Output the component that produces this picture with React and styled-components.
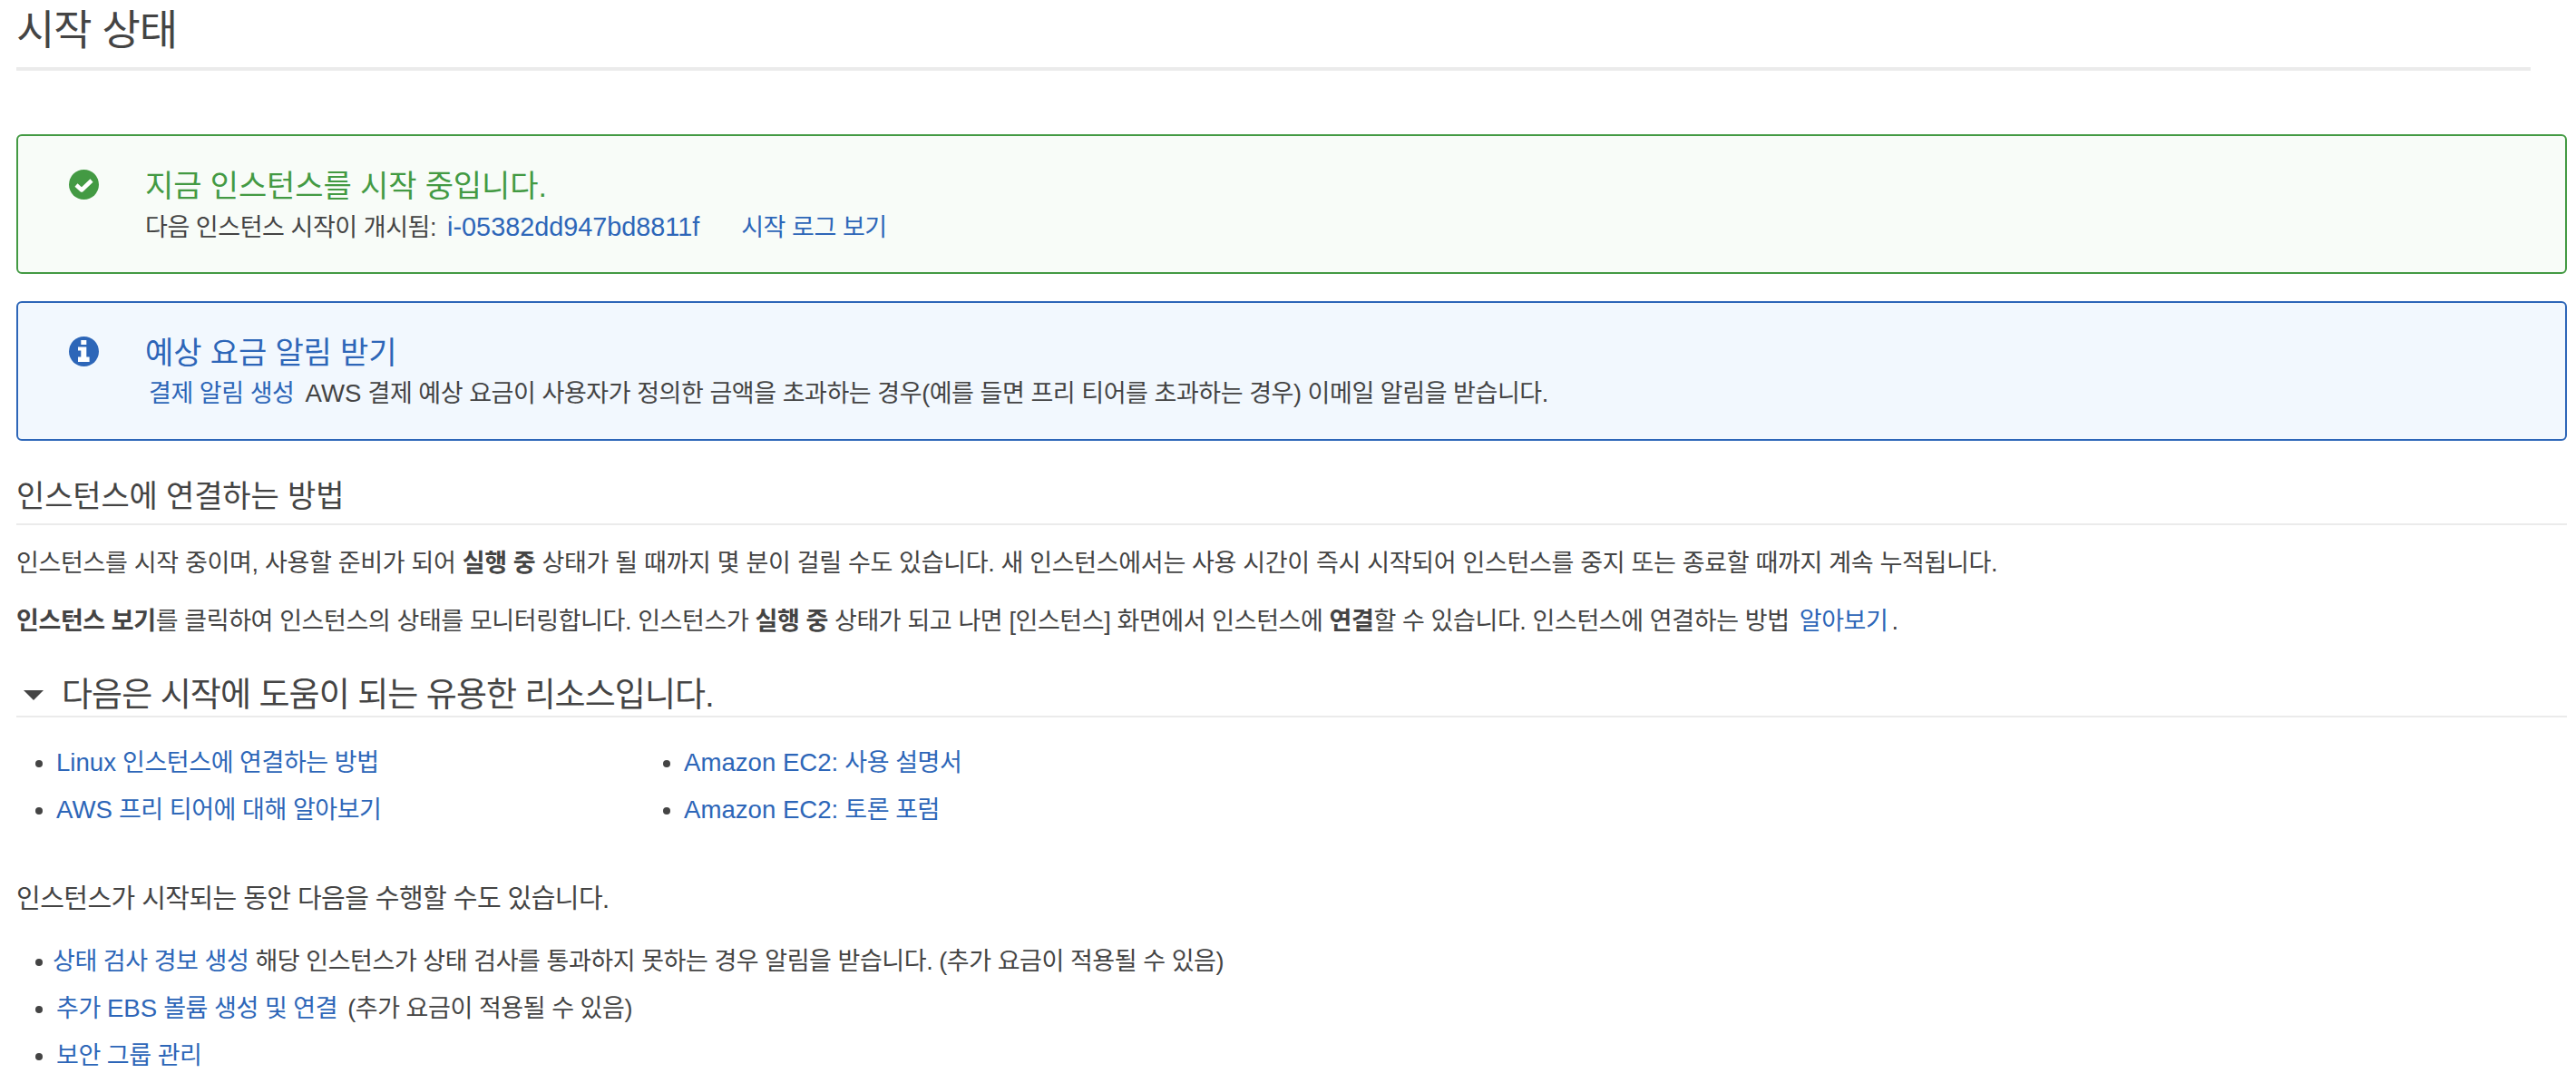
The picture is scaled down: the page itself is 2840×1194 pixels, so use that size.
import React from "react";
import styled, { createGlobalStyle } from "styled-components";

const Global = createGlobalStyle`
  html, body { margin: 0; padding: 0; background: #fff; height: 1194px; overflow: hidden; }
  body { font-family: "Liberation Sans", "Noto Sans CJK KR", sans-serif; color: #444; font-size: 27px; letter-spacing: -0.44px; }
  * { box-sizing: border-box; }
`;

const Page = styled.div`
  padding: 0 10px 0 18px;
`;
const Title = styled.h1`
  margin: 0 40px 70px 0;
  height: 78px;
  border-bottom: 4px solid #ebebeb;
  font-size: 46px;
  letter-spacing: -1px;
  font-weight: 400;
  line-height: 66px;
  color: #444;
`;
const Alert = styled.div`
  display: flex;
  height: 154px;
  margin-bottom: ${(p) => p.$mb}px;
  padding: 33px 0 0 56px;
  border: 2px solid ${(p) => p.$color};
  border-radius: 6px;
  background: ${(p) => p.$bg};
`;
const IconSlot = styled.div`
  flex: 0 0 33px;
  height: 33px;
  margin: 4px 51px 0 0;
`;
const AlertBody = styled.div`
  display: flex;
  flex-direction: column;
`;
const AlertTitle = styled.div`
  font-size: 34px;
  letter-spacing: -0.1px;
  line-height: 44px;
  color: ${(p) => p.$color};
`;
const AlertText = styled.div`
  line-height: 46px;
  color: #444;
  white-space: nowrap;
`;
const Link = styled.a`
  color: #2d66b8;
  text-decoration: none;
  margin: ${(p) => p.$m || "0"};
`;
const Latin = styled.span`
  font-size: ${(p) => p.$size || 27.6}px;
  letter-spacing: 0;
  margin: ${(p) => p.$m || "0"};
`;
const SectionHeading = styled.h2`
  margin: 0 0 20px;
  height: 93px;
  padding-top: 39px;
  border-bottom: 2px solid #ebebeb;
  font-size: 34px;
  letter-spacing: -0.13px;
  line-height: 44px;
  font-weight: 400;
`;
const Para = styled.p`
  margin: 0;
  height: 64px;
  line-height: 44px;
  white-space: nowrap;
  letter-spacing: ${(p) => p.$ls}px;
`;
const Resources = styled.h2`
  display: flex;
  align-items: center;
  gap: 20px;
  margin: 0;
  height: 64px;
  padding: 17px 0 0 8px;
  border-bottom: 2px solid #ebebeb;
  font-size: 37px;
  letter-spacing: -0.92px;
  line-height: 45px;
  font-weight: 400;
`;
const Caret = styled.span`
  width: 0;
  height: 0;
  border-left: 11px solid transparent;
  border-right: 11px solid transparent;
  border-top: 11px solid #444;
`;
const ResourceGrid = styled.ul`
  display: grid;
  grid-template-columns: 692px 600px;
  grid-auto-rows: 52px;
  margin: 0;
  padding: 24px 0 0 44px;
  line-height: 52px;
`;
const Item = styled.li`
  white-space: nowrap;
  &::marker { color: #444; }
`;
const Note = styled.span`
  margin-left: 4px;
`;
const Lead = styled.p`
  margin: 50px 0 0;
  height: 44px;
  font-size: 29px;
  letter-spacing: -0.55px;
  line-height: 44px;
`;
const ActionList = styled.ul`
  margin: 21px 0 0;
  padding: 0 0 0 44px;
  line-height: 52px;
`;

const CheckIcon = () => (
  <svg width="33" height="33" viewBox="0 0 33 33">
    <circle cx="16.5" cy="16.5" r="16.5" fill="#439a43" />
    <path d="M8 17l6 5.500L25 12" fill="none" stroke="#fff" strokeWidth="4.500" strokeLinejoin="round" />
  </svg>
);
const InfoIcon = () => (
  <svg width="33" height="33" viewBox="0 0 33 33">
    <circle cx="16.5" cy="16.5" r="16.5" fill="#2d66b8" />
    <rect x="13.300" y="4" width="6" height="5" fill="#fff" />
    <path d="M10 11.500h9.300V22.500h3.300V28H10V22.500h3.300V15.500H10z" fill="#fff" />
  </svg>
);

export default function App() {
  return (
    <Page>
      <Global />
      <Title>시작 상태</Title>
      <Alert $color="#439a43" $bg="#f8fcf8" $mb={30}>
        <IconSlot><CheckIcon /></IconSlot>
        <AlertBody>
          <AlertTitle $color="#439a43">지금 인스턴스를 시작 중입니다.</AlertTitle>
          <AlertText>
            다음 인스턴스 시작이 개시됨: <Link $m="0 0 0 5px"><Latin $size={28.8}>i-05382dd947bd8811f</Latin></Link>
            <Link $m="0 0 0 46px">시작 로그 보기</Link>
          </AlertText>
        </AlertBody>
      </Alert>
      <Alert $color="#2d66b8" $bg="#f2f8fe" $mb={0}>
        <IconSlot><InfoIcon /></IconSlot>
        <AlertBody>
          <AlertTitle $color="#2d66b8">예상 요금 알림 받기</AlertTitle>
          <AlertText>
            <Link $m="0 0 0 4px">결제 알림 생성</Link> <Latin $m="0 0 0 5px">AWS</Latin> 결제 예상 요금이 사용자가 정의한 금액을 초과하는 경우(예를 들면 프리 티어를 초과하는 경우) 이메일 알림을 받습니다.
          </AlertText>
        </AlertBody>
      </Alert>
      <SectionHeading>인스턴스에 연결하는 방법</SectionHeading>
      <Para $ls={-0.32}>인스턴스를 시작 중이며, 사용할 준비가 되어 <b>실행 중</b> 상태가 될 때까지 몇 분이 걸릴 수도 있습니다. 새 인스턴스에서는 사용 시간이 즉시 시작되어 인스턴스를 중지 또는 종료할 때까지 계속 누적됩니다.</Para>
      <Para $ls={-0.4}><b>인스턴스 보기</b>를 클릭하여 인스턴스의 상태를 모니터링합니다. 인스턴스가 <b>실행 중</b> 상태가 되고 나면 [인스턴스] 화면에서 인스턴스에 <b>연결</b>할 수 있습니다. 인스턴스에 연결하는 방법 <Link $m="0 4px 0 4px">알아보기</Link>.</Para>
      <Resources><Caret /><span>다음은 시작에 도움이 되는 유용한 리소스입니다.</span></Resources>
      <ResourceGrid>
        <Item><Link><Latin>Linux</Latin> 인스턴스에 연결하는 방법</Link></Item>
        <Item><Link><Latin>Amazon EC2:</Latin> 사용 설명서</Link></Item>
        <Item><Link><Latin>AWS</Latin> 프리 티어에 대해 알아보기</Link></Item>
        <Item><Link><Latin>Amazon EC2:</Latin> 토론 포럼</Link></Item>
      </ResourceGrid>
      <Lead>인스턴스가 시작되는 동안 다음을 수행할 수도 있습니다.</Lead>
      <ActionList>
        <Item><Link $m="0 0 0 -4px">상태 검사 경보 생성</Link> 해당 인스턴스가 상태 검사를 통과하지 못하는 경우 알림을 받습니다. (추가 요금이 적용될 수 있음)</Item>
        <Item><Link>추가 <Latin>EBS</Latin> 볼륨 생성 및 연결</Link> <Note>(추가 요금이 적용될 수 있음)</Note></Item>
        <Item><Link>보안 그룹 관리</Link></Item>
      </ActionList>
    </Page>
  );
}
